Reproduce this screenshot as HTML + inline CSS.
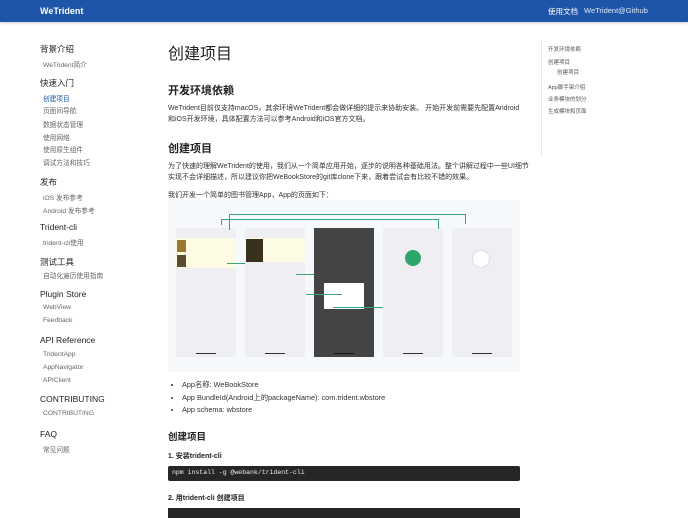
<!DOCTYPE html>
<html><head><meta charset="utf-8"><style>
*{margin:0;padding:0;box-sizing:border-box}
body{width:688px;height:512px;overflow:hidden;background:#fff;font-family:"Liberation Sans","Noto Sans CJK SC",sans-serif;color:#222;position:relative}
.a{position:absolute;white-space:nowrap}
.hd{position:absolute;left:0;top:0;width:688px;height:22px;background:#1f55a8;box-shadow:0 1px 3px rgba(0,0,0,.2)}
.sh{font-size:8.5px;color:#222;left:40px}
.si{font-size:6.7px;color:#666;left:43px}
.t{font-size:5.5px;color:#555;left:548px}
.p{font-size:7px;color:#333;left:168px}
.ph{position:absolute;width:60px;height:129px;top:228px;background:#efeff3}
.ph i{position:absolute;left:20px;bottom:3px;width:20px;height:1px;background:#333}
.g{position:absolute;background:#3aa57a}
</style></head><body>
<div class="hd"></div>
<div class="a" style="left:40px;top:6px;font-size:9px;font-weight:bold;color:#fff">WeTrident</div>
<div class="a" style="left:548px;top:6px;font-size:7.5px;color:#fff">使用文档</div>
<div class="a" style="left:584px;top:6px;font-size:7.5px;color:#dfe8f5">WeTrident@Github</div>

<div class="a sh" style="top:43px">背景介绍</div>
<div class="a si" style="top:59px">WeTrident简介</div>
<div class="a sh" style="top:77px">快速入门</div>
<div class="a si" style="top:93px;color:#1f55a8">创建项目</div>
<div class="a si" style="top:105px">页面间导航</div>
<div class="a si" style="top:119px">数据状态管理</div>
<div class="a si" style="top:132px">使用网络</div>
<div class="a si" style="top:144px">使用原生组件</div>
<div class="a si" style="top:157px">调试方法和技巧</div>
<div class="a sh" style="top:176px">发布</div>
<div class="a si" style="top:192px">iOS 发布参考</div>
<div class="a si" style="top:205px">Android 发布参考</div>
<div class="a sh" style="top:222px">Trident-cli</div>
<div class="a si" style="top:237px">trident-cli使用</div>
<div class="a sh" style="top:256px">测试工具</div>
<div class="a si" style="top:270px">自动化遍历使用指南</div>
<div class="a sh" style="top:289px">Plugin Store</div>
<div class="a si" style="top:304px">WebView</div>
<div class="a si" style="top:317px">Feedback</div>
<div class="a sh" style="top:335px">API Reference</div>
<div class="a si" style="top:351px">TridentApp</div>
<div class="a si" style="top:364px">AppNavigator</div>
<div class="a si" style="top:377px">APIClient</div>
<div class="a sh" style="top:394px">CONTRIBUTING</div>
<div class="a si" style="top:410px">CONTRIBUTING</div>
<div class="a sh" style="top:429px">FAQ</div>
<div class="a si" style="top:444px">常见问题</div>

<div class="a" style="left:541px;top:40px;width:1px;height:116px;background:#e6e6e6"></div>
<div class="a t" style="top:45px">开发环境依赖</div>
<div class="a t" style="top:58px">创建项目</div>
<div class="a t" style="top:68px;left:557px">创建项目</div>
<div class="a t" style="top:83px">App脚手架介绍</div>
<div class="a t" style="top:95px">业务模块的划分</div>
<div class="a t" style="top:107px">生成模块和页面</div>

<div class="a" style="left:168px;top:40px;font-size:16px;color:#222">创建项目</div>
<div class="a" style="left:168px;top:82px;font-size:11px;font-weight:bold">开发环境依赖</div>
<div class="a p" style="top:103px">WeTrident目前仅支持macOS，其余环境WeTrident都会做详细的提示来协助安装。 开始开发前需要先配置Android</div>
<div class="a p" style="top:114px">和iOS开发环境，具体配置方法可以参考Android和iOS官方文档。</div>
<div class="a" style="left:168px;top:140px;font-size:11px;font-weight:bold">创建项目</div>
<div class="a p" style="top:161px">为了快速的理解WeTrident的使用，我们从一个简单应用开始，逐步的说明各种基础用法。整个讲解过程中一些UI细节</div>
<div class="a p" style="top:172px">实现不会详细描述，所以建议你把WeBookStore的git库clone下来，跟着尝试会有比较不错的效果。</div>
<div class="a p" style="top:190px">我们开发一个简单的图书管理App，App的页面如下：</div>

<div class="a" style="left:168px;top:200px;width:352px;height:172px;background:#f6f9fb"></div>
<div class="ph" style="left:176px"><div style="position:absolute;top:10px;left:0;width:60px;height:30px;background:#fdfbe4"></div><div style="position:absolute;top:12px;left:1px;width:9px;height:12px;background:#9a7a30"></div><div style="position:absolute;top:27px;left:1px;width:9px;height:12px;background:#5a4a30"></div><i></i></div>
<div class="ph" style="left:245px"><div style="position:absolute;top:10px;left:0;width:60px;height:24px;background:#fdfbe4"></div><div style="position:absolute;top:11px;left:1px;width:17px;height:23px;background:#3a3020"></div><i></i></div>
<div class="ph" style="left:314px;background:#444"><div style="position:absolute;top:55px;left:10px;width:40px;height:26px;background:#fff"></div><i style="background:#111"></i></div>
<div class="ph" style="left:383px"><div style="position:absolute;top:22px;left:22px;width:16px;height:16px;border-radius:50%;background:#2ea66b"></div><i></i></div>
<div class="ph" style="left:452px"><div style="position:absolute;top:22px;left:20px;width:18px;height:18px;border-radius:50%;background:#fff;border:1px solid #dde"></div><i></i></div>
<div class="g" style="left:229px;top:214px;width:237px;height:1px"></div>
<div class="g" style="left:229px;top:214px;width:1px;height:16px"></div>
<div class="g" style="left:465px;top:214px;width:1px;height:10px"></div>
<div class="g" style="left:221px;top:219px;width:218px;height:1px"></div>
<div class="g" style="left:221px;top:219px;width:1px;height:6px"></div>
<div class="g" style="left:438px;top:219px;width:1px;height:10px"></div>
<div class="g" style="left:227px;top:263px;width:18px;height:1px"></div>
<div class="g" style="left:296px;top:274px;width:18px;height:1px"></div>
<div class="g" style="left:306px;top:294px;width:36px;height:1px"></div>
<div class="g" style="left:333px;top:307px;width:50px;height:1px"></div>

<ul class="a" style="left:182px;top:379px;font-size:7.3px;color:#333;line-height:12.5px">
<li>App名称: WeBookStore</li>
<li>App BundleId(Android上的packageName): com.trident.wbstore</li>
<li>App schema: wbstore</li></ul>
<div class="a" style="left:168px;top:429px;font-size:9.5px;font-weight:bold">创建项目</div>
<div class="a" style="left:168px;top:451px;font-size:7px;font-weight:bold">1. 安装trident-cli</div>
<div class="a" style="left:168px;top:466px;width:352px;height:15px;background:#262626;border-radius:2px"></div>
<div class="a" style="left:172px;top:469px;font-size:6.5px;color:#eee;font-family:'Liberation Mono',monospace">npm install -g @webank/trident-cli</div>
<div class="a" style="left:168px;top:493px;font-size:7px;font-weight:bold">2. 用trident-cli 创建项目</div>
<div class="a" style="left:168px;top:508px;width:352px;height:10px;background:#262626"></div>
</body></html>
